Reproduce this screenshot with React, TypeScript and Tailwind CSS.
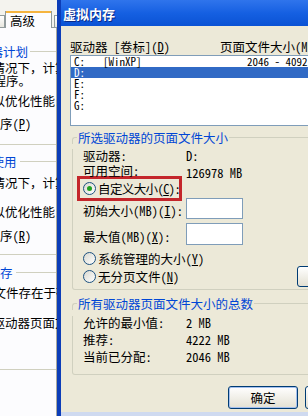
import React from "react";

function Mn({ c }: { c: string }) {
  return (
    <>
      (<u>{c}</u>)
    </>
  );
}

function Radio({ on }: { on?: boolean }) {
  return (
    <span className="w-[13px] h-[13px] shrink-0 rounded-full border border-[#1c5180] bg-gradient-to-br from-[#d8d8d0] to-white flex items-center justify-center">
      {on && <span className="w-[5px] h-[5px] rounded-full bg-[#21a121]" />}
    </span>
  );
}

function GroupBox({ title, className, children }: { title: string; className: string; children: React.ReactNode }) {
  return (
    <div className={className}>
      <div className="flex h-[13px]">
        <div className="w-[5px] mt-[6px] border-t border-l border-[#d0d0bf] rounded-tl-[3px]" />
        <span className="px-[1px] leading-[13px] text-[#0046d5] whitespace-nowrap">{title}</span>
        <div className="flex-1 mt-[6px] border-t border-r border-[#d0d0bf] rounded-tr-[3px]" />
      </div>
      {children}
    </div>
  );
}

const drives = [
  { d: "C:", label: "[WinXP]", size: "2046 - 4092" },
  { d: "D:", label: "", size: "", sel: true },
  { d: "E:", label: "", size: "" },
  { d: "F:", label: "", size: "" },
  { d: "G:", label: "", size: "" },
];

export default function App() {
  return (
    <div className="w-[308px] h-[416px] overflow-hidden flex bg-white text-[12.5px] text-black font-['Noto_Sans_Mono_CJK_SC','Noto_Sans_CJK_SC',sans-serif]">
      {/* background window: performance options, advanced tab */}
      <aside className="w-[57px] shrink-0 flex flex-col overflow-hidden bg-[#f4f3ee]">
        <div className="h-[28px] shrink-0 flex items-end">
          <div className="w-[5px] h-[13px] border-t border-r border-b border-[#919b9c] bg-gradient-to-b from-white to-[#e8e7df]" />
          <div className="w-[47px] h-[17px] shrink-0 flex flex-col border-x border-[#919b9c] bg-[#fcfcfe]">
            <div className="h-[2px] bg-[#f5b43f]" />
            <div className="flex-1 flex items-center pl-[4px] leading-[13px]">高级</div>
          </div>
          <div className="w-[2px] h-[1px] bg-[#919b9c]" />
          <div className="w-[3px] h-[13px] border-t border-l border-b border-[#919b9c] bg-gradient-to-b from-white to-[#e8e7df]" />
        </div>

        <div className="flex-1 bg-[#fcfcfe] border-r border-[#a9a89e]">
          <div className="pb-[14px] border-b border-[#d0d0bf]">
            <div className="mt-[17px] h-[13px] flex items-center whitespace-nowrap">
              <span className="shrink-0 ml-[-34.5px] leading-[13px] text-[#0046d5]">处理器计划</span>
              <div className="flex-1 h-px ml-[2px] bg-[#d0d0bf]" />
            </div>
            <div className="mt-[3px] h-[13px] leading-[13px] whitespace-nowrap ml-[-32.5px]">默认情况下，计算机优化用于运行</div>
            <div className="h-[13px] leading-[13px] whitespace-nowrap ml-[-6.5px]">程序。</div>
            <div className="mt-[7px] h-[13px] leading-[13px] whitespace-nowrap ml-[-32.5px]">调整以优化性能:</div>
            <div className="mt-[10px] h-[13px] leading-[13px] whitespace-nowrap ml-[-12.5px]">程序<Mn c="P" /></div>
          </div>

          <div className="pb-[12px] border-b border-[#d0d0bf]">
            <div className="mt-[10px] h-[13px] flex items-center whitespace-nowrap">
              <span className="shrink-0 ml-[-33.5px] leading-[13px] text-[#0046d5]">内存使用</span>
              <div className="flex-1 h-px ml-[3px] bg-[#d0d0bf]" />
            </div>
            <div className="mt-[8px] h-[13px] leading-[13px] whitespace-nowrap ml-[-32.5px]">默认情况下，计算机优化内存</div>
            <div className="mt-[16px] h-[13px] leading-[13px] whitespace-nowrap ml-[-32.5px]">调整以优化性能:</div>
            <div className="mt-[11px] h-[13px] leading-[13px] whitespace-nowrap ml-[-12.5px]">程序<Mn c="R" /></div>
          </div>

          <div className="pb-[40px] border-b border-[#d0d0bf]">
            <div className="mt-[11px] h-[13px] flex items-center whitespace-nowrap">
              <span className="shrink-0 ml-[-37.5px] leading-[13px] text-[#0046d5]">虚拟内存</span>
              <div className="flex-1 h-px ml-[3px] bg-[#d0d0bf]" />
            </div>
            <div className="mt-[7px] h-[13px] leading-[13px] whitespace-nowrap ml-[-31.5px]">分页文件存在于硬盘上</div>
            <div className="mt-[17px] h-[13px] leading-[13px] whitespace-nowrap ml-[-32.5px]">所有驱动器页面文件大小</div>
          </div>
        </div>
      </aside>

      {/* virtual memory dialog */}
      <section className="w-[290px] shrink-0 flex flex-col border-l-[4px] border-[#0c3db8]">
        <header className="h-[26px] shrink-0 flex items-center pl-[2px] bg-gradient-to-b from-[#2f74ec] via-[#1560e2] to-[#0a52d4]">
          <span className="text-white font-bold text-[13px] leading-[13px] [text-shadow:1px_1px_0_#0a2a86]">虚拟内存</span>
        </header>

        <div className="flex-1 bg-[#ece9d8] pl-[9px] pt-[14px]">
          <div className="h-[13px] leading-[13px] flex whitespace-nowrap">
            <span className="w-[150px] shrink-0">驱动器 [卷标]<Mn c="D" /></span>
            <span>页面文件大小(MB)</span>
          </div>

          <div className="mt-[2px] h-[71px] border border-[#7f9db9] bg-white text-[11px]">
            {drives.map((r) => (
              <div
                key={r.d}
                className={
                  r.sel
                    ? "h-[11px] leading-[11px] flex pl-[3px] whitespace-nowrap bg-[#316ac5] text-white"
                    : "h-[11px] leading-[11px] flex pl-[3px] whitespace-nowrap"
                }
              >
                <span className="w-[29px] shrink-0">{r.d}</span>
                <span className="w-[144px] shrink-0">{r.label}</span>
                <span>{r.size}</span>
              </div>
            ))}
          </div>

          <GroupBox title="所选驱动器的页面文件大小" className="mt-[5px] ml-[2px]">
            <div className="border-l border-r border-b border-[#d0d0bf] rounded-b-[3px] pl-[10px] pb-[2px]">
              <div className="mt-[5px] h-[13px] leading-[13px] flex whitespace-nowrap">
                <span className="w-[103px] shrink-0">驱动器:</span>
                <span>D:</span>
              </div>
              <div className="mt-[2px] h-[13px] leading-[13px] flex whitespace-nowrap">
                <span className="w-[103px] shrink-0">可用空间:</span>
                <span className="pt-[2px]">126978 MB</span>
              </div>

              <div className="mt-[-1px] ml-[-6px] w-[105px] h-[25px] border-[3px] border-[#c4262b] flex items-center gap-[2px] pl-[3px] whitespace-nowrap">
                <Radio on />
                <span className="leading-[13px] tracking-[-0.6px]">自定义大小<Mn c="C" />:</span>
              </div>

              <div className="mt-[-3px] h-[21px] flex items-center whitespace-nowrap">
                <span className="w-[103px] shrink-0 pt-[4px] leading-[13px]">初始大小(MB)<Mn c="I" />:</span>
                <div className="w-[57px] h-[21px] border border-[#7f9db9] bg-white" />
              </div>
              <div className="mt-[4px] h-[22px] flex items-center whitespace-nowrap">
                <span className="w-[103px] shrink-0 pt-[4px] leading-[13px]">最大值(MB)<Mn c="X" />:</span>
                <div className="w-[57px] h-[22px] border border-[#7f9db9] bg-white" />
              </div>

              <div className="mt-[7px] h-[13px] flex items-center gap-[2px] whitespace-nowrap">
                <Radio />
                <span className="leading-[13px]">系统管理的大小<Mn c="Y" /></span>
              </div>
              <div className="mt-[1px] h-[21px] flex items-center whitespace-nowrap">
                <div className="w-[214px] shrink-0 flex items-center gap-[2px]">
                  <Radio />
                  <span className="leading-[13px]">无分页文件<Mn c="N" /></span>
                </div>
                <button className="w-[75px] h-[21px] shrink-0 rounded-[3px] border border-[#003c74] bg-gradient-to-b from-white to-[#e3e0d2] leading-[13px]">
                  设置<Mn c="S" />
                </button>
              </div>
            </div>
          </GroupBox>

          <GroupBox title="所有驱动器页面文件大小的总数" className="mt-[7px] ml-[2px]">
            <div className="border-l border-r border-b border-[#d0d0bf] rounded-b-[3px] pl-[10px] pb-[11px]">
              <div className="mt-[6px] h-[13px] leading-[13px] flex whitespace-nowrap">
                <span className="w-[103px] shrink-0">允许的最小值:</span>
                <span>2 MB</span>
              </div>
              <div className="mt-[4px] h-[13px] leading-[13px] flex whitespace-nowrap">
                <span className="w-[103px] shrink-0">推荐:</span>
                <span>4222 MB</span>
              </div>
              <div className="mt-[4px] h-[13px] leading-[13px] flex whitespace-nowrap">
                <span className="w-[103px] shrink-0">当前已分配:</span>
                <span>2046 MB</span>
              </div>
            </div>
          </GroupBox>

          <div className="mt-[11px] ml-[158px] flex gap-[7px]">
            <button className="w-[70px] h-[23px] shrink-0 rounded-[3px] border border-[#003c74] bg-gradient-to-b from-white to-[#e3e0d2] shadow-[inset_0_0_0_1px_#a4c0ee] leading-[13px]">
              确定
            </button>
            <button className="w-[70px] h-[23px] shrink-0 rounded-[3px] border border-[#003c74] bg-gradient-to-b from-white to-[#e3e0d2] leading-[13px]">
              取消
            </button>
          </div>
        </div>
        <div className="h-[4px] shrink-0 bg-[#cfdaf0]" />
      </section>
    </div>
  );
}
